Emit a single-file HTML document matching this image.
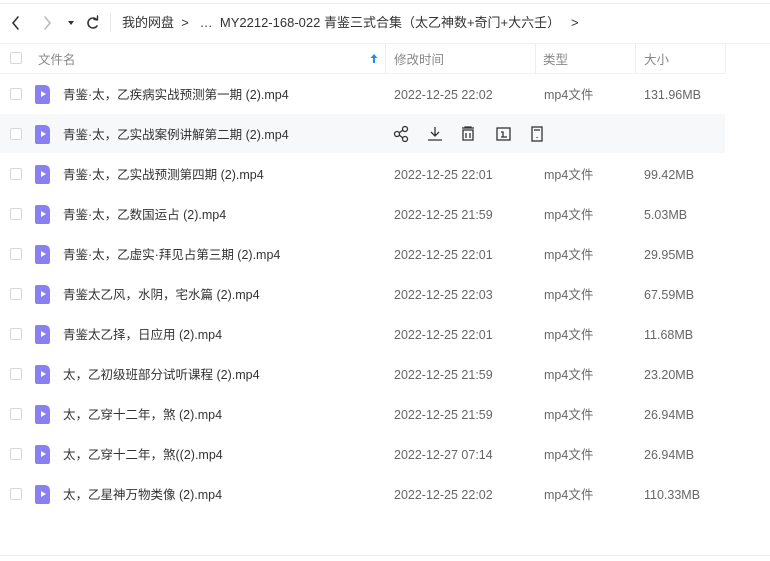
<!DOCTYPE html>
<html><head><meta charset="utf-8"><style>
*{margin:0;padding:0;box-sizing:border-box}
body{width:770px;height:561px;background:#fff;font-family:"Liberation Sans","Noto Sans CJK SC",sans-serif;color:#333;position:relative;overflow:hidden;font-size:12.5px}
.a{position:absolute;white-space:nowrap;line-height:18px;height:18px}
.cb{position:absolute;left:10px;width:12px;height:12px;border:1px solid #d8d8d8;border-radius:2px;background:#fff}
.fi{position:absolute;left:35px;width:15px;height:19px;background:#8a80f2;border-radius:2px 5px 2px 2px}
.fi:after{content:"";position:absolute;left:6px;top:6px;border-left:5px solid #fff;border-top:3.5px solid transparent;border-bottom:3.5px solid transparent}
.g{color:#666}
.h{color:#888}
.ln{position:absolute}
</style></head><body>
<div class="ln" style="left:0;top:3px;width:770px;height:1px;background:#eee"></div>
<svg class="ln" style="left:8px;top:14px" width="100" height="18" viewBox="0 0 100 18" fill="none" stroke-width="1.6" stroke-linecap="round">
<path d="M10 3 L5 9 L10 15" stroke="#333"/>
<path d="M37 3 L42 9 L37 15" stroke="#bbb"/>
<path d="M60 7 h6 l-3 4z" fill="#333" stroke="none"/>
<path d="M89 6 A5 5 0 1 0 89 12" stroke="#333"/><path d="M86 5.5 h3.5 v-3.5" stroke="#333" stroke-width="1.4"/>
</svg>
<div class="ln" style="left:110px;top:14px;width:1px;height:18px;background:#e5e5e5"></div>
<div class="a" style="left:122px;top:14px;font-size:13px;color:#333">我的网盘 &nbsp;&gt; &nbsp; … &nbsp;MY2212-168-022 青鉴三式合集（太乙神数+奇门+大六壬） &nbsp; &gt;</div>
<div class="ln" style="left:0;top:43px;width:770px;height:1px;background:#f0f0f0"></div>
<div class="ln" style="left:0;top:73px;width:725px;height:1px;background:#f0f0f0"></div>
<div class="cb" style="top:52px"></div>
<div class="a h" style="left:38px;top:51px">文件名</div>
<svg class="ln" style="left:370px;top:53px" width="8" height="11" viewBox="0 0 8 11"><path d="M4 1 L7.5 5 H5 V10 H3 V5 H0.5z" fill="#1e90e8"/></svg>
<div class="ln" style="left:385px;top:44px;width:1px;height:29px;background:#eee"></div>
<div class="a h" style="left:394px;top:51px">修改时间</div>
<div class="ln" style="left:535px;top:44px;width:1px;height:29px;background:#eee"></div>
<div class="a h" style="left:543px;top:51px">类型</div>
<div class="ln" style="left:635px;top:44px;width:1px;height:29px;background:#eee"></div>
<div class="a h" style="left:644px;top:51px">大小</div>
<div class="ln" style="left:725px;top:44px;width:1px;height:29px;background:#eee"></div>
<div class="ln" style="left:0;top:114px;width:725px;height:39px;background:#f7f8fa"></div>
<div id="rows"></div>
<svg class="ln" style="left:393px;top:125px" width="155" height="18" viewBox="0 0 155 18" fill="none" stroke="#333" stroke-width="1.3">
<circle cx="4" cy="9" r="2.5"/><circle cx="12" cy="4" r="2.5"/><circle cx="12" cy="14" r="2.5"/><path d="M6 8 L10 5 M6 10 L10 13"/>
<path d="M42 2 v9 M38 7 l4 4 4-4 M35 15 h14"/>
<path d="M69 3 h12 M72 3 v-1 h6 v1 M70 5 h10 v10 h-10z M73 8 v5 M77 8 v5"/>
<rect x="104" y="3" width="13" height="12"/><path d="M108 7 h2 v5 M108 12 h4 M112 12 h2" />
<rect x="139" y="2" width="10" height="14"/><path d="M141 5 h6 M144 12 v1"/>
</svg>
<div class="ln" style="left:0;top:555px;width:770px;height:1px;background:#eee"></div>
<script>
var d=[["青鉴·太，乙疾病实战预测第一期 (2).mp4","2022-12-25 22:02","131.96MB"],
["青鉴·太，乙实战案例讲解第二期 (2).mp4","",""],
["青鉴·太，乙实战预测第四期 (2).mp4","2022-12-25 22:01","99.42MB"],
["青鉴·太，乙数国运占 (2).mp4","2022-12-25 21:59","5.03MB"],
["青鉴·太，乙虚实·拜见占第三期 (2).mp4","2022-12-25 22:01","29.95MB"],
["青鉴太乙风，水阴，宅水篇 (2).mp4","2022-12-25 22:03","67.59MB"],
["青鉴太乙择，日应用 (2).mp4","2022-12-25 22:01","11.68MB"],
["太，乙初级班部分试听课程 (2).mp4","2022-12-25 21:59","23.20MB"],
["太，乙穿十二年，煞 (2).mp4","2022-12-25 21:59","26.94MB"],
["太，乙穿十二年，煞((2).mp4","2022-12-27 07:14","26.94MB"],
["太，乙星神万物类像 (2).mp4","2022-12-25 22:02","110.33MB"]];
var h="";d.forEach(function(r,i){var c=94+i*40;
h+='<div class="cb" style="top:'+(c-6)+'px"></div><div class="fi" style="top:'+(c-9)+'px"></div><div class="a" style="left:63px;top:'+(c-8)+'px">'+r[0]+'</div>';
if(r[1])h+='<div class="a g" style="left:394px;top:'+(c-8)+'px">'+r[1]+'</div><div class="a g" style="left:544px;top:'+(c-8)+'px">mp4文件</div><div class="a g" style="left:644px;top:'+(c-8)+'px">'+r[2]+'</div>';});
document.getElementById("rows").outerHTML=h;
</script>
</body></html>
